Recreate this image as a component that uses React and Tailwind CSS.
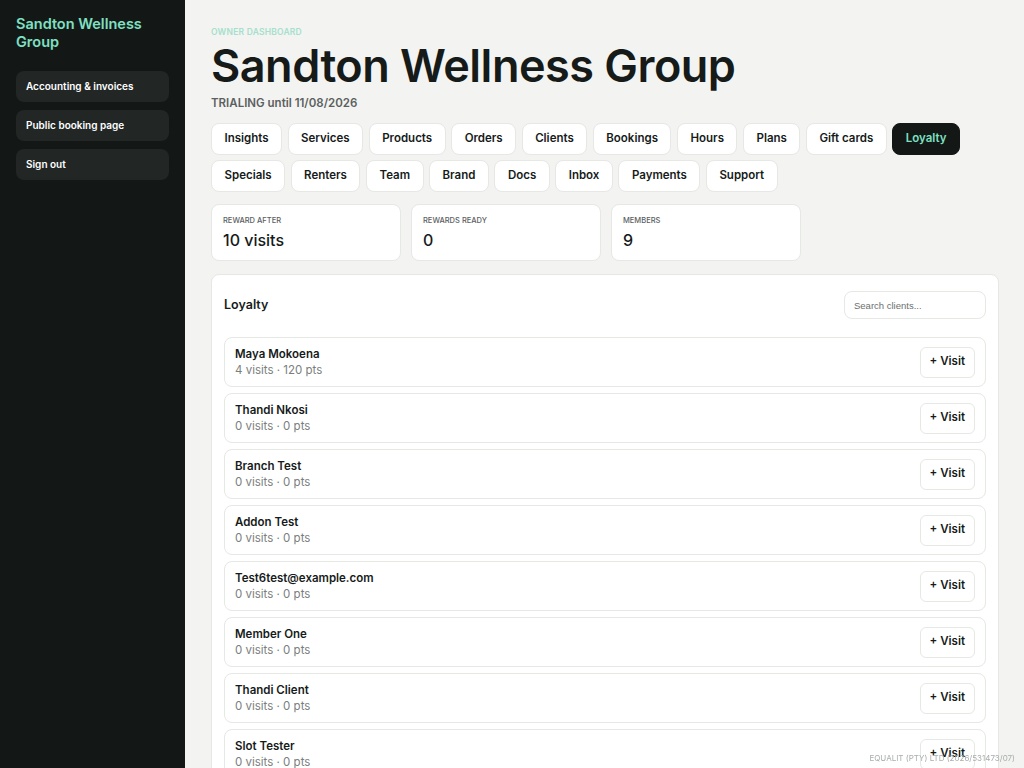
import { useState } from "react";

const tabs = [
  "Insights",
  "Services",
  "Products",
  "Orders",
  "Clients",
  "Bookings",
  "Hours",
  "Plans",
  "Gift cards",
  "Loyalty",
  "Specials",
  "Renters",
  "Team",
  "Brand",
  "Docs",
  "Inbox",
  "Payments",
  "Support",
];

const stats = [
  { label: "Reward after", value: "10 visits" },
  { label: "Rewards ready", value: "0" },
  { label: "Members", value: "9" },
];

const members = [
  { name: "Maya Mokoena", visits: 4, pts: 120 },
  { name: "Thandi Nkosi", visits: 0, pts: 0 },
  { name: "Branch Test", visits: 0, pts: 0 },
  { name: "Addon Test", visits: 0, pts: 0 },
  { name: "Test6test@example.com", visits: 0, pts: 0 },
  { name: "Member One", visits: 0, pts: 0 },
  { name: "Thandi Client", visits: 0, pts: 0 },
  { name: "Slot Tester", visits: 0, pts: 0 },
  { name: "Lerato Dlamini", visits: 0, pts: 0 },
];

export default function App() {
  const [active, setActive] = useState("Loyalty");
  const [query, setQuery] = useState("");

  const shown = members.filter((m) =>
    m.name.toLowerCase().includes(query.toLowerCase())
  );

  return (
    <div className="flex h-screen overflow-hidden bg-[#f3f4f1] font-['Inter',sans-serif] text-[#161b1a]">
      {/* Sidebar */}
      <aside className="w-[185px] shrink-0 bg-[#131817] px-4 pt-[15px]">
        <div className="text-[14.5px] font-semibold leading-[18px] text-[#7fe0c2]">
          Sandton Wellness Group
        </div>
        <nav className="mt-[20px] flex flex-col gap-2">
          {["Accounting & invoices", "Public booking page", "Sign out"].map(
            (item) => (
              <button
                key={item}
                className="h-[31px] rounded-lg bg-[#222726] px-[10px] text-left text-[10px] font-semibold text-white"
              >
                {item}
              </button>
            )
          )}
        </nav>
      </aside>

      {/* Main */}
      <main className="flex-1 overflow-hidden pl-[26px] pr-[25px] pt-[26px]">
        <div className="text-[8.5px] font-semibold uppercase leading-[12px] tracking-wide text-[#a6dfcd]">
          Owner dashboard
        </div>
        <h1 className="text-[45px] font-semibold leading-[56px] tracking-[-0.5px]">
          Sandton Wellness Group
        </h1>
        <div className="mt-[1px] text-[11.5px] font-semibold leading-[16px] text-[#5b605f]">
          TRIALING until 11/08/2026
        </div>

        {/* Tabs */}
        <div className="mt-[12px] flex max-w-[770px] flex-wrap gap-x-[5.5px] gap-y-[5px]">
          {tabs.map((t) => (
            <button
              key={t}
              onClick={() => setActive(t)}
              className={
                t === active
                  ? "h-[32px] rounded-lg border border-[#131817] bg-[#131817] px-[12.5px] text-[11.5px] font-semibold text-[#7fe0c2]"
                  : "h-[32px] rounded-lg border border-[#e6e8e4] bg-white px-[12.5px] text-[11.5px] font-semibold text-[#161b1a]"
              }
            >
              {t}
            </button>
          ))}
        </div>

        {/* Stats */}
        <div className="mt-[12px] flex gap-[10px]">
          {stats.map((s) => (
            <div
              key={s.label}
              className="h-[57px] w-[190px] rounded-lg border border-[#e6e8e4] bg-white px-[11px] pt-[11px]"
            >
              <div className="text-[7.5px] font-medium uppercase leading-[10px] text-[#5b605f]">
                {s.label}
              </div>
              <div className="mt-[3px] text-[16px] font-medium leading-[22px]">
                {s.value}
              </div>
            </div>
          ))}
        </div>

        {/* Loyalty list */}
        <section className="mt-[13px] rounded-lg border border-[#e6e8e4] bg-white px-[12px] pb-4 pt-[16px]">
          <div className="flex items-center justify-between">
            <h2 className="text-[12.5px] font-semibold">Loyalty</h2>
            <input
              value={query}
              onChange={(e) => setQuery(e.target.value)}
              placeholder="Search clients..."
              className="h-[28px] w-[142px] rounded-lg border border-[#e6e8e4] px-[9px] font-['Liberation_Sans',sans-serif] text-[9.5px] outline-none placeholder:text-[#6b6f6e]"
            />
          </div>
          <div className="mt-[18px] flex flex-col gap-[6px]">
            {shown.map((m) => (
              <div
                key={m.name}
                className="flex h-[50px] items-center justify-between rounded-lg border border-[#e6e8e4] pl-[10px] pr-[10px]"
              >
                <div>
                  <div className="text-[11.5px] font-semibold leading-[15px]">
                    {m.name}
                  </div>
                  <div className="text-[11.5px] leading-[16px] text-[#7a7e7d]">
                    {m.visits} visits · {m.pts} pts
                  </div>
                </div>
                <button className="h-[31px] rounded-md border border-[#e6e8e4] bg-white px-[9px] text-[11.5px] font-semibold">
                  + Visit
                </button>
              </div>
            ))}
          </div>
        </section>
      </main>

      <div className="fixed bottom-[4px] right-[9px] text-[8px] text-[#a9adab]">
        EQUALIT (PTY) LTD (2026/531473/07)
      </div>
    </div>
  );
}
